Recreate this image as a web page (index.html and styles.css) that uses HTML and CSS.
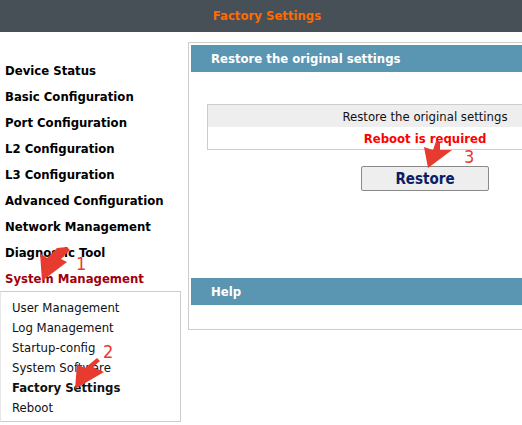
FILE: index.html
```html
<!DOCTYPE html>
<html>
<head>
<meta charset="utf-8">
<link rel="stylesheet" href="styles.css">
</head>
<body>
<div class="topbar"><span class="title">Factory Settings</span></div>
<div class="main">
  <div class="sidebar">
    <ul class="menu">
      <li>Device Status</li>
      <li>Basic Configuration</li>
      <li>Port Configuration</li>
      <li>L2 Configuration</li>
      <li>L3 Configuration</li>
      <li>Advanced Configuration</li>
      <li>Network Management</li>
      <li>Diagnostic Tool</li>
      <li class="active">System Management</li>
    </ul>
    <ul class="submenu">
      <li>User Management</li>
      <li>Log Management</li>
      <li>Startup-config</li>
      <li>System Software</li>
      <li class="current">Factory Settings</li>
      <li>Reboot</li>
    </ul>
  </div>
  <div class="panel">
    <div class="bar">Restore the original settings</div>
    <div class="section">
      <table class="info">
        <tr class="row-head"><td>Restore the original settings</td></tr>
        <tr class="row-note"><td>Reboot is required</td></tr>
      </table>
      <div class="actions"><button class="btn">Restore</button></div>
    </div>
    <div class="bar">Help</div>
    <div class="help"></div>
  </div>
</div>
<svg class="marks" width="522" height="425" viewBox="0 0 522 425">
  <g fill="#e63b2e">
    <polygon points="67,247 70,250 61,259 67,262 42,281 40,253 47,258 57,248"/>
    <polygon points="97,358 100,361 93,367 104,372 75,389 77,364 85,368"/>
    <polygon points="436,141 440,143 440,150 452,150 428,168 424,147 433,150"/>
  </g>
  <g fill="#e63b2e" font-family="DejaVu Sans Condensed, DejaVu Sans, sans-serif" font-size="18">
    <text x="76" y="270">1</text>
    <text x="103" y="358">2</text>
    <text x="464" y="163">3</text>
  </g>
</svg>
</body>
</html>
```
FILE: styles.css
```css
html, body {
  margin: 0;
  padding: 0;
  overflow: hidden;
  background: #fff;
  font-family: "DejaVu Sans Condensed", "DejaVu Sans", sans-serif;
  font-size: 13px;
  color: #000;
}

body {
  position: relative;
  width: 522px;
  height: 425px;
}

.topbar {
  height: 32px;
  background: #474f57;
  display: flex;
  align-items: center;
  justify-content: center;
}

.title {
  color: #ff6a00;
  font-weight: bold;
  font-size: 13px;
  margin-left: 12px;
  margin-top: -1px;
}

.main {
  display: flex;
  align-items: flex-start;
}

.sidebar {
  width: 188px;
  flex: none;
}

.menu {
  list-style: none;
  margin: 0;
  padding: 26px 0 0 5px;
}

.menu li {
  height: 26px;
  line-height: 26px;
  font-weight: bold;
  white-space: nowrap;
}

.menu li.active {
  color: #a0000e;
}

.submenu {
  list-style: none;
  margin: -1px 0 0 0;
  padding: 6px 0 3px 11px;
  width: 168px;
  border: 1px solid #cccccc;
  border-left-color: #e6e6e6;
}

.submenu li {
  height: 20px;
  line-height: 20px;
  color: #111;
  white-space: nowrap;
}

.submenu li.current {
  font-weight: bold;
}

.panel {
  flex: none;
  width: 468px;
  margin-top: 10px;
  border: 1px solid #cccccc;
  padding: 2px 2px 0 2px;
}

.bar {
  height: 27px;
  line-height: 27px;
  background: #5a95b1;
  color: #fff;
  font-weight: bold;
  padding-left: 20px;
}

.section {
  height: 206px;
  padding: 32px 16px 0 16px;
  box-sizing: border-box;
}

.info {
  width: 100%;
  border-collapse: collapse;
  border: 1px solid #cccccc;
}

.info td {
  text-align: center;
  padding: 0;
}

.row-head td {
  background: #eeeeee;
  height: 22px;
  color: #111;
}

.row-note td {
  height: 22px;
  color: #ff0000;
  font-weight: bold;
}

.actions {
  display: flex;
  justify-content: center;
  margin-top: 16px;
}

.btn {
  width: 128px;
  height: 25px;
  background: #eeeeee;
  border: 1px solid #8a8a8a;
  border-radius: 2px;
  font-family: "DejaVu Sans Condensed", "DejaVu Sans", sans-serif;
  font-size: 15px;
  font-weight: bold;
  color: #0c1d66;
  padding: 0;
}

.help {
  height: 24px;
}

.marks {
  position: absolute;
  left: 0;
  top: 0;
  pointer-events: none;
}
```
